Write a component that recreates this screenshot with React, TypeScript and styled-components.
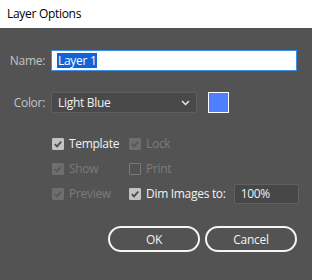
import styled, { createGlobalStyle } from 'styled-components';

const GlobalStyle = createGlobalStyle`
  html, body {
    margin: 0;
    padding: 0;
    background: #535353;
  }
  body {
    font-family: "Open Sans", "Noto Sans", "Liberation Sans", sans-serif;
    font-size: 12px;
    letter-spacing: -0.3px;
  }
`;

const Dialog = styled.div`
  width: 312px;
  height: 280px;
  display: flex;
  flex-direction: column;
  background: #535353;
  overflow: hidden;
`;

const TitleBar = styled.div`
  height: 28px;
  flex: none;
  display: flex;
  align-items: center;
  padding-left: 7px;
  background: #ffffff;
  color: #000;
  font-size: 12px;
  box-sizing: border-box;
  padding-bottom: 2px;
`;

const Body = styled.div`
  display: flex;
  flex-direction: column;
  padding: 22px 15px 0 0;
`;

const FieldRow = styled.div<{ $gap?: number }>`
  display: grid;
  grid-template-columns: 45px auto;
  column-gap: 6px;
  align-items: center;
  margin-bottom: ${(p) => p.$gap ?? 0}px;
`;

const Label = styled.label`
  text-align: right;
  color: #c4c4c4;
  white-space: nowrap;
`;

const NameInput = styled.div`
  width: 246px;
  height: 21px;
  box-sizing: border-box;
  border: 1px solid #3d8ee6;
  background: #fff;
  display: flex;
  align-items: center;
  padding-left: 5px;
`;

const Selected = styled.span`
  background: #0f65d6;
  color: #fff;
  padding: 0 1px;
  line-height: 15px;
`;

const ColorControls = styled.div`
  display: flex;
  align-items: center;
  gap: 11px;
`;

const Select = styled.div`
  width: 146px;
  height: 21px;
  box-sizing: border-box;
  border: 1px solid #5e5e5e;
  border-radius: 2px;
  background: #494949;
  color: #f0f0f0;
  display: flex;
  align-items: center;
  justify-content: space-between;
  padding: 0 6px 0 6px;
`;

const Swatch = styled.div<{ $color: string }>`
  width: 21px;
  height: 21px;
  box-sizing: border-box;
  border: 1px solid #ffffff;
  background: ${(p) => p.$color};
`;

const Options = styled.div`
  display: grid;
  grid-template-columns: 77px auto;
  grid-auto-rows: 25px;
  margin: 18px 0 0 52px;
  align-items: center;
`;

const Option = styled.label<{ $enabled: boolean }>`
  display: flex;
  align-items: center;
  gap: 5px;
  color: ${(p) => (p.$enabled ? '#f2f2f2' : '#7c7c7c')};
  white-space: nowrap;
`;

const Box = styled.span<{ $checked: boolean; $enabled: boolean }>`
  width: 12px;
  height: 12px;
  box-sizing: border-box;
  border-radius: 1px;
  display: flex;
  align-items: center;
  justify-content: center;
  background: ${(p) =>
    !p.$checked ? 'transparent' : p.$enabled ? '#c2c2c2' : '#6e6e6e'};
  border: 1px solid
    ${(p) => (!p.$checked ? '#7a7a7a' : p.$enabled ? '#c2c2c2' : '#6e6e6e')};
`;

const PercentInput = styled.div`
  width: 65px;
  height: 20px;
  box-sizing: border-box;
  margin-left: 3px;
  border: 1px solid #616161;
  border-radius: 2px;
  background: #474747;
  color: #f0f0f0;
  display: flex;
  align-items: center;
  padding-left: 6px;
`;

const Buttons = styled.div`
  display: flex;
  justify-content: flex-end;
  gap: 5px;
  margin-top: 20px;
`;

const Button = styled.button`
  width: 92px;
  height: 26px;
  box-sizing: border-box;
  border: 2px solid #f4f4f4;
  border-radius: 13px;
  background: transparent;
  color: #f2f2f2;
  font-family: inherit;
  font-size: 12px;
  letter-spacing: -0.3px;
  padding: 0;
`;

const Check = ({ color }: { color: string }) => (
  <svg width="10" height="10" viewBox="0 0 10 10">
    <polyline
      points="1.8,5.2 4,7.4 8.2,2.6"
      fill="none"
      stroke={color}
      strokeWidth="1.7"
    />
  </svg>
);

type Opt = { label: string; checked: boolean; enabled: boolean };

const CheckOption = ({ label, checked, enabled }: Opt) => (
  <Option $enabled={enabled}>
    <Box $checked={checked} $enabled={enabled}>
      {checked && <Check color={enabled ? '#4a4a4a' : '#585858'} />}
    </Box>
    {label}
  </Option>
);

const App = () => {
  return (
    <Dialog>
      <GlobalStyle />
      <TitleBar>Layer Options</TitleBar>
      <Body>
        <FieldRow $gap={21}>
          <Label>Name:</Label>
          <NameInput>
            <Selected>Layer 1</Selected>
          </NameInput>
        </FieldRow>
        <FieldRow>
          <Label>Color:</Label>
          <ColorControls>
            <Select>
              Light Blue
              <svg width="9" height="6" viewBox="0 0 9 6">
                <polyline
                  points="1,1 4.5,4.5 8,1"
                  fill="none"
                  stroke="#e8e8e8"
                  strokeWidth="1.5"
                />
              </svg>
            </Select>
            <Swatch $color="#4f7fff" />
          </ColorControls>
        </FieldRow>
        <Options>
          <CheckOption label="Template" checked enabled />
          <CheckOption label="Lock" checked enabled={false} />
          <CheckOption label="Show" checked enabled={false} />
          <CheckOption label="Print" checked={false} enabled={false} />
          <CheckOption label="Preview" checked enabled={false} />
          <Option $enabled>
            <Box $checked $enabled>
              <Check color="#4a4a4a" />
            </Box>
            Dim Images to:
            <PercentInput>100%</PercentInput>
          </Option>
        </Options>
        <Buttons>
          <Button>OK</Button>
          <Button>Cancel</Button>
        </Buttons>
      </Body>
    </Dialog>
  );
};

export default App;
